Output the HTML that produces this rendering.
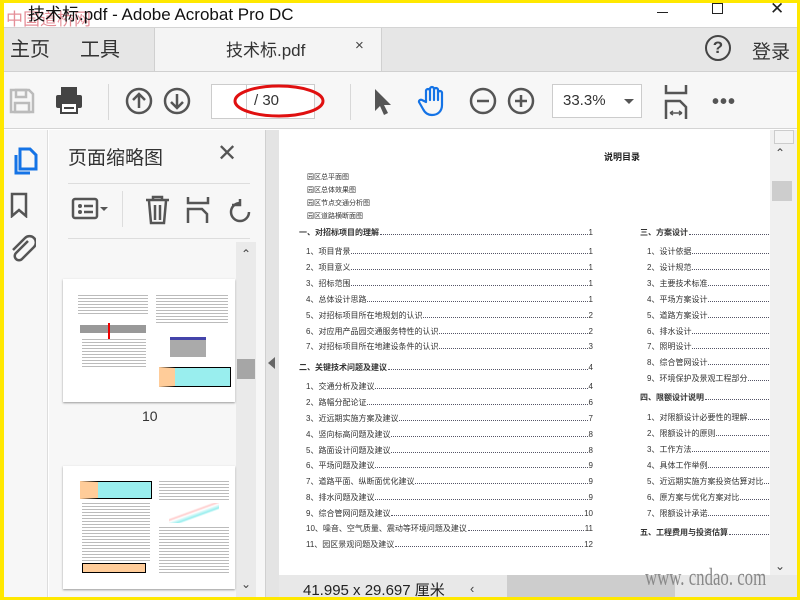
<!DOCTYPE html>
<html><head><meta charset="utf-8"><style>
*{margin:0;padding:0;box-sizing:border-box}
body{width:800px;height:600px;overflow:hidden;background:#ffe800;font-family:"Liberation Sans","Noto Sans CJK SC",sans-serif;position:relative}
.a{position:absolute;white-space:nowrap}
#win{position:absolute;left:4px;top:3px;width:793px;height:594px;background:#fff;overflow:hidden}
.t{font-size:8px;color:#333;white-space:nowrap;display:flex;align-items:flex-end;position:absolute;line-height:9px}
.t .d{flex:1;border-bottom:1px dotted #556;margin:0 1px 2px}
.t b{font-weight:bold}
svg{position:absolute}
</style></head><body>
<div id="win">
<!-- title bar -->
<div class="a" style="left:0;top:0;width:793px;height:24px;background:#fff"></div>
<div class="a" style="left:2px;top:2px;font-size:17px;color:#c23;opacity:.5">中国道桥网</div>
<div class="a" style="left:24px;top:-3px;font-size:17px;color:#111">技术标.pdf - Adobe Acrobat Pro DC</div>
<div class="a" style="left:653px;top:9px;width:11px;height:1px;background:#222"></div>
<div class="a" style="left:708px;top:0px;width:11px;height:11px;border:1px solid #222"></div>
<div class="a" style="left:766px;top:-4px;font-size:17px;color:#222">✕</div>
<!-- tab bar -->
<div class="a" style="left:0;top:24px;width:793px;height:45px;background:#e6e6e6;border-top:1px solid #d4d4d4;border-bottom:1px solid #d0d0d0"></div>
<div class="a" style="left:150px;top:25px;width:228px;height:43px;background:#f4f4f4;border-left:1px solid #d0d0d0;border-right:1px solid #d0d0d0"></div>
<div class="a" style="left:6px;top:30px;font-size:20px;color:#333">主页</div>
<div class="a" style="left:76px;top:30px;font-size:20px;color:#333">工具</div>
<div class="a" style="left:222px;top:33px;font-size:17px;color:#333">技术标.pdf</div>
<div class="a" style="left:351px;top:34px;font-size:15px;color:#444">×</div>
<div class="a" style="left:701px;top:32px;width:26px;height:26px;border:2px solid #444;border-radius:50%;text-align:center;font-size:17px;line-height:22px;color:#444;font-weight:bold">?</div>
<div class="a" style="left:748px;top:34px;font-size:19px;color:#333">登录</div>
<!-- toolbar -->
<div class="a" style="left:0;top:69px;width:793px;height:57px;background:#f7f7f7;border-bottom:1px solid #d4d4d4"></div>
<svg style="left:4px;top:84px" width="28" height="28" viewBox="0 0 28 28"><path d="M3 3h18l4 4v18H3z" fill="none" stroke="#bbb" stroke-width="2.5"/><rect x="8" y="3" width="10" height="7" fill="none" stroke="#bbb" stroke-width="2.5"/><rect x="7" y="16" width="14" height="9" fill="none" stroke="#bbb" stroke-width="2.5"/></svg>
<svg style="left:50px;top:82px" width="30" height="30" viewBox="0 0 30 30"><rect x="7" y="2" width="16" height="8" fill="#444"/><rect x="2" y="10" width="26" height="13" rx="2" fill="#444"/><rect x="7" y="18" width="16" height="10" fill="#fff" stroke="#444" stroke-width="2"/><rect x="10" y="22" width="10" height="2" fill="#444"/></svg>
<div class="a" style="left:104px;top:81px;width:1px;height:36px;background:#d8d8d8"></div>
<svg style="left:121px;top:84px" width="28" height="28" viewBox="0 0 28 28"><circle cx="14" cy="14" r="12" fill="none" stroke="#555" stroke-width="2.5"/><path d="M14 21V7M8 13l6-6 6 6" fill="none" stroke="#555" stroke-width="2.5"/></svg>
<svg style="left:159px;top:84px" width="28" height="28" viewBox="0 0 28 28"><circle cx="14" cy="14" r="12" fill="none" stroke="#555" stroke-width="2.5"/><path d="M14 7v14M8 15l6 6 6-6" fill="none" stroke="#555" stroke-width="2.5"/></svg>
<div class="a" style="left:207px;top:81px;width:104px;height:35px;background:#fff;border:1px solid #ccc"></div>
<div class="a" style="left:242px;top:81px;width:1px;height:35px;background:#ccc"></div>
<div class="a" style="left:250px;top:89px;font-size:15px;color:#333">/ 30</div>
<svg style="left:225px;top:78px" width="100" height="40"><ellipse cx="50" cy="20" rx="44" ry="15" fill="none" stroke="#e01010" stroke-width="3"/></svg>
<div class="a" style="left:346px;top:81px;width:1px;height:36px;background:#d8d8d8"></div>
<svg style="left:368px;top:84px" width="22" height="30" viewBox="0 0 22 30"><path d="M3 2v22l5-5 4 9 4-2-4-8h7z" fill="#555"/></svg>
<svg style="left:413px;top:82px" width="32" height="32" viewBox="0 0 32 32"><path d="M9 17V6a2 2 0 014 0v9V4a2 2 0 014 0v11V5a2 2 0 014 0v10V8a2 2 0 014 0v12c0 6-4 10-10 10-4 0-7-2-9-6l-4-7a2 2 0 013-2z" fill="none" stroke="#1473e6" stroke-width="2.2" stroke-linejoin="round"/></svg>
<svg style="left:465px;top:84px" width="28" height="28"><circle cx="14" cy="14" r="12" fill="none" stroke="#555" stroke-width="2.5"/><path d="M8 14h12" stroke="#555" stroke-width="2.5"/></svg>
<svg style="left:503px;top:84px" width="28" height="28"><circle cx="14" cy="14" r="12" fill="none" stroke="#555" stroke-width="2.5"/><path d="M8 14h12M14 8v12" stroke="#555" stroke-width="2.5"/></svg>
<div class="a" style="left:548px;top:81px;width:90px;height:34px;background:#fff;border:1px solid #ccc"></div>
<div class="a" style="left:559px;top:89px;font-size:15px;color:#333">33.3%</div>
<div class="a" style="left:620px;top:96px;border-left:5px solid transparent;border-right:5px solid transparent;border-top:5px solid #555"></div>
<svg style="left:660px;top:82px" width="26" height="34" viewBox="0 0 26 34"><path d="M2 0v8h20V0M2 34V16h14l6 6v12" fill="none" stroke="#555" stroke-width="2.5"/><path d="M6 28h12M6 28l3-2M6 28l3 2M18 28l-3-2M18 28l-3 2" stroke="#555" stroke-width="1.5"/></svg>
<div class="a" style="left:708px;top:88px;font-size:20px;color:#555;letter-spacing:1px;font-weight:bold">•••</div>
<!-- left icon strip -->
<div class="a" style="left:0;top:127px;width:44px;height:467px;background:#f7f7f7;border-right:1px solid #ddd"></div>
<svg style="left:8px;top:144px" width="26" height="30" viewBox="0 0 26 30"><path d="M8 2h10l6 6v14H8z M4 8v18h14" fill="none" stroke="#1473e6" stroke-width="3"/></svg>
<svg style="left:6px;top:189px" width="18" height="26"><path d="M2 2h14v22l-7-6-7 6z" fill="none" stroke="#555" stroke-width="2.5"/></svg>
<svg style="left:4px;top:230px" width="28" height="30" viewBox="0 0 28 30"><path d="M20 8L8 20a4 4 0 006 6l12-12a6 6 0 00-9-9L5 17" fill="none" stroke="#555" stroke-width="2.5"/></svg>
<!-- panel -->
<div class="a" style="left:45px;top:127px;width:216px;height:467px;background:#f7f7f7"></div>
<div class="a" style="left:64px;top:140px;font-size:19px;color:#333">页面缩略图</div>
<div class="a" style="left:213px;top:136px;font-size:24px;color:#555">✕</div>
<div class="a" style="left:64px;top:180px;width:182px;height:1px;background:#ddd"></div>
<div class="a" style="left:64px;top:235px;width:182px;height:1px;background:#ddd"></div>
<svg style="left:67px;top:194px" width="40" height="24"><rect x="2" y="2" width="24" height="19" rx="2" fill="none" stroke="#555" stroke-width="2.5"/><circle cx="9" cy="9" r="2" fill="#555"/><circle cx="9" cy="15" r="2" fill="#555"/><path d="M13 9h9M13 15h9" stroke="#555" stroke-width="2.5"/><path d="M29 10h8l-4 4z" fill="#555"/></svg>
<div class="a" style="left:118px;top:188px;width:1px;height:36px;background:#ddd"></div>
<svg style="left:140px;top:192px" width="28" height="30"><path d="M2 5h23M9 5V2h9v3M5 6l2 22h13l2-22M11 10v15M16 10v15" fill="none" stroke="#555" stroke-width="2.5"/></svg>
<svg style="left:182px;top:192px" width="28" height="30"><path d="M2 2v6h20V2M2 28V14h14l5 5v9" fill="none" stroke="#555" stroke-width="2.5"/></svg>
<svg style="left:222px;top:192px" width="26" height="30"><path d="M14 8a9 9 0 10 9 9" fill="none" stroke="#555" stroke-width="2.5"/><path d="M6 10h8V4" fill="none" stroke="#555" stroke-width="2.5"/></svg>
<div class="a" style="left:232px;top:239px;width:20px;height:355px;background:#eaeaea"></div>
<div class="a" style="left:237px;top:244px;font-size:12px;color:#444">⌃</div>
<div class="a" style="left:233px;top:356px;width:18px;height:20px;background:#a6a6a6"></div>
<div class="a" style="left:237px;top:574px;font-size:12px;color:#444">⌄</div>
<div class="a" style="left:59px;top:276px;width:172px;height:123px;background:#fff;box-shadow:0 1px 2px #999"></div>
<div class="a" style="left:74px;top:292px;width:70px;height:20px;background:repeating-linear-gradient(#bbb 0 1px,#fff 1px 3px)"></div>
<div class="a" style="left:76px;top:322px;width:66px;height:8px;background:#999"></div>
<div class="a" style="left:104px;top:320px;width:2px;height:16px;background:#e00"></div>
<div class="a" style="left:78px;top:336px;width:64px;height:30px;background:repeating-linear-gradient(#bbb 0 1px,#fff 1px 3px)"></div>
<div class="a" style="left:152px;top:292px;width:72px;height:30px;background:repeating-linear-gradient(#bbb 0 1px,#fff 1px 3px)"></div>
<div class="a" style="left:166px;top:334px;width:36px;height:20px;background:#aaa;border-top:3px solid #44a"></div>
<div class="a" style="left:155px;top:364px;width:72px;height:20px;background:#9ee;border:1px solid #000;border-left:16px solid #fc9"></div>
<div class="a" style="left:138px;top:405px;font-size:14px;color:#333">10</div>
<div class="a" style="left:59px;top:463px;width:172px;height:123px;background:#fff;box-shadow:0 1px 2px #999"></div>
<div class="a" style="left:76px;top:478px;width:72px;height:18px;background:#9ee;border:1px solid #000;border-left:18px solid #fc9"></div>
<div class="a" style="left:78px;top:500px;width:68px;height:58px;background:repeating-linear-gradient(#bbb 0 1px,#fff 1px 3px)"></div>
<div class="a" style="left:78px;top:560px;width:64px;height:10px;background:#fc9;border:1px solid #000"></div>
<div class="a" style="left:155px;top:478px;width:70px;height:20px;background:repeating-linear-gradient(#bbb 0 1px,#fff 1px 3px)"></div>
<div class="a" style="left:165px;top:500px;width:50px;height:20px;background:linear-gradient(160deg,#fff 40%,#fcc 45%,#fff 50%,#9ee 60%,#fff 65%)"></div>
<div class="a" style="left:155px;top:524px;width:70px;height:46px;background:repeating-linear-gradient(#bbb 0 1px,#fff 1px 3px)"></div>
<!-- separator -->
<div class="a" style="left:261px;top:127px;width:14px;height:467px;background:#e4e4e4;border-left:1px solid #d0d0d0"></div>
<div class="a" style="left:264px;top:354px;border-top:6px solid transparent;border-bottom:6px solid transparent;border-right:7px solid #666"></div>
<!-- document -->
<div class="a" style="left:275px;top:127px;width:491px;height:445px;background:#fff"></div>
<div class="a" style="left:766px;top:127px;width:27px;height:445px;background:#f0f0f0"></div>
<div class="a" style="left:770px;top:127px;width:20px;height:14px;border:1px solid #ccc;background:#f4f4f4"></div>
<div class="a" style="left:771px;top:143px;font-size:12px;color:#444">⌃</div>
<div class="a" style="left:768px;top:178px;width:20px;height:20px;background:#cdcdcd"></div>
<div class="a" style="left:771px;top:556px;font-size:12px;color:#444">⌄</div>
<div class="a" style="left:275px;top:572px;width:518px;height:22px;background:#e8e8e8"></div>
<div class="a" style="left:299px;top:576px;font-size:15px;color:#222">41.995 x 29.697 厘米</div>
<div class="a" style="left:466px;top:578px;font-size:13px;color:#444">‹</div>
<div class="a" style="left:503px;top:572px;width:168px;height:22px;background:#cdcdcd"></div>
<div class="a" style="left:641px;top:562px;font-size:24px;color:#888;font-family:'Liberation Serif',serif;transform:scaleX(.7);transform-origin:left">www. cndao. com</div>
<div class="a" style="left:600px;top:147px;font-size:9px;font-weight:bold;color:#222">说明目录</div>
<div class="a" style="left:303px;top:168px;font-size:7px;line-height:13px;color:#333">园区总平面图<br>园区总体效果图<br>园区节点交通分析图<br>园区道路横断面图</div>

<div class="t" style="left:295px;top:225px;width:294px"><b>一、对招标项目的理解</b><span class="d"></span>1</div>
<div class="t" style="left:302px;top:244px;width:287px">1、项目背景<span class="d"></span>1</div>
<div class="t" style="left:302px;top:260px;width:287px">2、项目意义<span class="d"></span>1</div>
<div class="t" style="left:302px;top:276px;width:287px">3、招标范围<span class="d"></span>1</div>
<div class="t" style="left:302px;top:292px;width:287px">4、总体设计思路<span class="d"></span>1</div>
<div class="t" style="left:302px;top:308px;width:287px">5、对招标项目所在地规划的认识<span class="d"></span>2</div>
<div class="t" style="left:302px;top:324px;width:287px">6、对应用产品园交通服务特性的认识<span class="d"></span>2</div>
<div class="t" style="left:302px;top:339px;width:287px">7、对招标项目所在地建设条件的认识<span class="d"></span>3</div>
<div class="t" style="left:295px;top:360px;width:294px"><b>二、关键技术问题及建议</b><span class="d"></span>4</div>
<div class="t" style="left:302px;top:379px;width:287px">1、交通分析及建议<span class="d"></span>4</div>
<div class="t" style="left:302px;top:395px;width:287px">2、路幅分配论证<span class="d"></span>6</div>
<div class="t" style="left:302px;top:411px;width:287px">3、近远期实施方案及建议<span class="d"></span>7</div>
<div class="t" style="left:302px;top:427px;width:287px">4、竖向标高问题及建议<span class="d"></span>8</div>
<div class="t" style="left:302px;top:443px;width:287px">5、路面设计问题及建议<span class="d"></span>8</div>
<div class="t" style="left:302px;top:458px;width:287px">6、平场问题及建议<span class="d"></span>9</div>
<div class="t" style="left:302px;top:474px;width:287px">7、道路平面、纵断面优化建议<span class="d"></span>9</div>
<div class="t" style="left:302px;top:490px;width:287px">8、排水问题及建议<span class="d"></span>9</div>
<div class="t" style="left:302px;top:506px;width:287px">9、综合管网问题及建议<span class="d"></span>10</div>
<div class="t" style="left:302px;top:521px;width:287px">10、噪音、空气质量、震动等环境问题及建议<span class="d"></span>11</div>
<div class="t" style="left:302px;top:537px;width:287px">11、园区景观问题及建议<span class="d"></span>12</div>

<div class="t" style="left:636px;top:225px;width:140px"><b>三、方案设计</b><span class="d"></span></div>
<div class="t" style="left:643px;top:244px;width:133px">1、设计依据<span class="d"></span></div>
<div class="t" style="left:643px;top:260px;width:133px">2、设计规范<span class="d"></span></div>
<div class="t" style="left:643px;top:276px;width:133px">3、主要技术标准<span class="d"></span></div>
<div class="t" style="left:643px;top:292px;width:133px">4、平场方案设计<span class="d"></span></div>
<div class="t" style="left:643px;top:308px;width:133px">5、道路方案设计<span class="d"></span></div>
<div class="t" style="left:643px;top:324px;width:133px">6、排水设计<span class="d"></span></div>
<div class="t" style="left:643px;top:339px;width:133px">7、照明设计<span class="d"></span></div>
<div class="t" style="left:643px;top:355px;width:133px">8、综合管网设计<span class="d"></span></div>
<div class="t" style="left:643px;top:371px;width:133px">9、环境保护及景观工程部分<span class="d"></span></div>
<div class="t" style="left:636px;top:390px;width:140px"><b>四、限额设计说明</b><span class="d"></span></div>
<div class="t" style="left:643px;top:410px;width:133px">1、对限额设计必要性的理解<span class="d"></span></div>
<div class="t" style="left:643px;top:426px;width:133px">2、限额设计的原则<span class="d"></span></div>
<div class="t" style="left:643px;top:442px;width:133px">3、工作方法<span class="d"></span></div>
<div class="t" style="left:643px;top:458px;width:133px">4、具体工作举例<span class="d"></span></div>
<div class="t" style="left:643px;top:474px;width:133px">5、近远期实施方案投资估算对比<span class="d"></span></div>
<div class="t" style="left:643px;top:490px;width:133px">6、原方案与优化方案对比<span class="d"></span></div>
<div class="t" style="left:643px;top:506px;width:133px">7、限额设计承诺<span class="d"></span></div>
<div class="t" style="left:636px;top:525px;width:140px"><b>五、工程费用与投资估算</b><span class="d"></span></div>
<div class="a" style="left:766px;top:220px;width:27px;height:330px;background:#f0f0f0"></div>
</div>
</body></html>
